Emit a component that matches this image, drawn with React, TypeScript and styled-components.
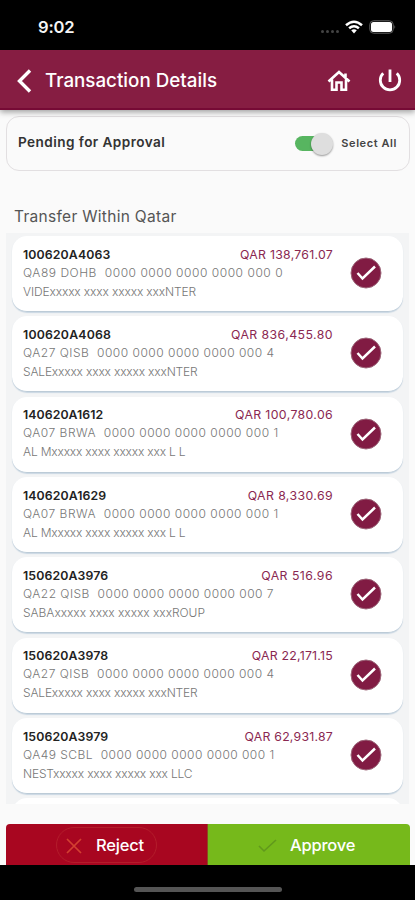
import React from "react";
import styled, { createGlobalStyle } from "styled-components";

const GlobalStyle = createGlobalStyle`
  * { box-sizing: border-box; }
  body { margin: 0; background: #fafafa; font-family: Inter, sans-serif; }
`;

const Screen = styled.div`
  width: 415px;
  height: 900px;
  display: flex;
  flex-direction: column;
  background: #fafafa;
  overflow: hidden;
`;

const StatusBar = styled.div`
  height: 50px;
  flex: none;
  display: flex;
  align-items: center;
  padding: 4px 19px 0 38px;
  background: #000;
  color: #f5f5f5;
`;

const Clock = styled.span`
  flex: 1;
  font-size: 16.6px;
  font-weight: 600;
  letter-spacing: -0.2px;
`;

const Signal = styled.div`
  display: flex;
  gap: 2px;
  padding-top: 9px;
  margin-right: 6px;
`;

const Dot = styled.i`
  width: 3px;
  height: 3px;
  border-radius: 50%;
  background: #444;
`;

const WifiIcon = styled.svg`
  width: 18px;
  height: 14px;
  margin-right: 6px;
`;

const BatteryIcon = styled.svg`
  width: 27px;
  height: 14px;
`;

const Header = styled.header`
  height: 60px;
  flex: none;
  display: flex;
  align-items: center;
  padding: 3px 13px 0 16px;
  background: #861d42;
  border-bottom: 2px solid #760a35;
  box-shadow: 0 2px 6px rgba(0, 0, 0, 0.38);
  color: #fff;
  z-index: 1;
`;

const Title = styled.h1`
  flex: 1;
  margin: 0 0 0 13px;
  font: 500 18.8px/24px Inter, sans-serif;
  letter-spacing: 0;
  padding-top: 1px;
  white-space: nowrap;
`;

const BackIcon = styled.svg`
  width: 16px;
  height: 24px;
`;

const HeaderIcon = styled.svg`
  width: 24px;
  height: 24px;
  margin-left: 27px;
`;

const PendingPanel = styled.section`
  height: 55px;
  flex: none;
  display: flex;
  align-items: center;
  margin: 6px 5px 0 6px;
  padding: 0 12px 3px 11px;
  border: 1px solid #e2dfe1;
  border-radius: 13px;
`;

const PendingTitle = styled.h2`
  flex: 1;
  margin: 0;
  font: 600 13.6px/20px Inter, sans-serif;
  letter-spacing: 0.43px;
  color: #333;
`;

const Track = styled.div`
  width: 38px;
  height: 15px;
  display: flex;
  align-items: center;
  justify-content: flex-end;
  border-radius: 8px;
  background: linear-gradient(90deg, #57b560 75%, transparent 75%);
  margin-top: 3px;
`;

const Knob = styled.div`
  width: 22px;
  height: 22px;
  flex: none;
  border-radius: 50%;
  background: #dedede;
  box-shadow: 0 1px 2px rgba(0, 0, 0, 0.4);
`;

const ToggleLabel = styled.span`
  margin: 2px 0 0 8px;
  font-size: 11px;
  font-weight: 600;
  letter-spacing: 0.58px;
  color: #444;
`;

const SectionTitle = styled.h2`
  flex: none;
  height: 62px;
  margin: 0;
  padding: 35px 0 0 14px;
  font: 400 15.5px/22px Inter, sans-serif;
  letter-spacing: 0.3px;
  color: #555;
`;

const List = styled.main`
  height: 571px;
  flex: none;
  display: flex;
  flex-direction: column;
  gap: 4.35px;
  margin: 0 6px;
  padding: 3px 6px 0;
  background: #f3f4f5;
  overflow: hidden;
`;

const Card = styled.article`
  height: 76px;
  flex: none;
  display: flex;
  align-items: center;
  padding: 0 20px 1px 11px;
  border-radius: 15px;
  background: #fff;
  border-bottom: 1px solid #bccbd7;
  box-shadow: 0 1px 1px rgba(150, 180, 205, 0.45);
`;

const Details = styled.div`
  width: 310px;
  margin-right: 17px;
`;

const Heading = styled.div`
  display: flex;
  justify-content: space-between;
  line-height: 19px;
`;

const Reference = styled.span<{ $spacing: number }>`
  font-size: 12.3px;
  font-weight: 600;
  letter-spacing: ${(p) => p.$spacing}px;
  color: #222;
`;

const Amount = styled.span<{ $spacing: number }>`
  font-size: 12.3px;
  letter-spacing: ${(p) => p.$spacing}px;
  color: #8a2851;
`;

const Line = styled.div<{ $spacing: number }>`
  font-size: 12px;
  font-weight: 300;
  line-height: 18.8px;
  letter-spacing: ${(p) => p.$spacing}px;
  white-space: pre;
  color: #777;
`;

const CheckIcon = styled.svg`
  width: 32px;
  height: 32px;
  flex: none;
`;

const Actions = styled.div`
  display: flex;
  height: 41px;
  flex: none;
  margin: 20px 5px 0 6px;
`;

const ActionButton = styled.button<{ $tone: "reject" | "approve" }>`
  width: 50%;
  flex: none;
  display: flex;
  align-items: center;
  justify-content: center;
  padding: ${(p) => (p.$tone === "reject" ? "0" : "0 17px 0 0")};
  border: 0;
  border-right: ${(p) => (p.$tone === "reject" ? "1px solid #8b4a20" : "0")};
  border-radius: ${(p) => (p.$tone === "reject" ? "4px 0 0 0" : "0 4px 0 0")};
  background: ${(p) => (p.$tone === "reject" ? "#a80620" : "#76b91b")};
  color: #fff;
  font: 500 16.5px/24px Inter, sans-serif;
  letter-spacing: -0.2px;
`;

const ButtonContent = styled.span<{ $outlined?: boolean }>`
  width: 101px;
  height: 36px;
  display: flex;
  align-items: center;
  gap: 13px;
  padding-left: 7px;
  border: 1px solid ${(p) => (p.$outlined ? "#b31d2b" : "transparent")};
  border-radius: 18px;
  white-space: nowrap;
`;

const ActionIcon = styled.svg`
  width: 19px;
  height: 20px;
  flex: none;
  margin-top: 2px;
`;

const HomeArea = styled.footer`
  flex: 1;
  display: flex;
  align-items: center;
  justify-content: center;
  padding-top: 14px;
  background: #000;
`;

const HomeIndicator = styled.div`
  width: 148px;
  height: 5px;
  border-radius: 3px;
  background: #555;
`;

type Transaction = {
  id: string;
  amount: string;
  account: string;
  name: string;
  spacing: [number, number, number, number];
};

const transactions: Transaction[] = [
  { id: "100620A4063", amount: "QAR 138,761.07", account: "QA89 DOHB  0000 0000 0000 0000 000 0", name: "VIDExxxxx xxxx xxxxx xxxNTER", spacing: [0.13, 0.26, 0.53, -0.14] },
  { id: "100620A4068", amount: "QAR 836,455.80", account: "QA27 QISB  0000 0000 0000 0000 000 4", name: "SALExxxxx xxxx xxxxx xxxNTER", spacing: [0.18, 0.43, 0.49, -0.18] },
  { id: "140620A1612", amount: "QAR 100,780.06", account: "QA07 BRWA  0000 0000 0000 0000 000 1", name: "AL Mxxxxx xxxx xxxxx xxx L L", spacing: [0.07, 0.36, 0.5, -0.19] },
  { id: "140620A1629", amount: "QAR 8,330.69", account: "QA07 BRWA  0000 0000 0000 0000 000 1", name: "AL Mxxxxx xxxx xxxxx xxx L L", spacing: [0.1, 0.4, 0.5, -0.19] },
  { id: "150620A3976", amount: "QAR 516.96", account: "QA22 QISB  0000 0000 0000 0000 000 7", name: "SABAxxxxx xxxx xxxxx xxxROUP", spacing: [0.13, 0.45, 0.48, -0.04] },
  { id: "150620A3978", amount: "QAR 22,171.15", account: "QA27 QISB  0000 0000 0000 0000 000 4", name: "SALExxxxx xxxx xxxxx xxxNTER", spacing: [0.13, 0.23, 0.49, -0.18] },
  { id: "150620A3979", amount: "QAR 62,931.87", account: "QA49 SCBL  0000 0000 0000 0000 000 1", name: "NESTxxxxx xxxx xxxxx xxx LLC", spacing: [0.13, 0.23, 0.46, -0.18] },
];

export default function App() {
  return (
    <Screen>
      <GlobalStyle />
      <StatusBar>
        <Clock>9:02</Clock>
        <Signal><Dot /><Dot /><Dot /><Dot /></Signal>
        <WifiIcon viewBox="0 0 18 14" fill="none" stroke="#fff" strokeWidth="2.5">
          <path d="M1 5.2Q9-1.8 17 5.2M4.1 8.3Q9 4.1 13.9 8.3" />
          <path d="M6.2 10.2Q9 8.2 11.8 10.2L9 13.5Z" fill="#fff" stroke="none" />
        </WifiIcon>
        <BatteryIcon viewBox="0 0 27 14">
          <rect x=".7" y=".7" width="23.6" height="12.6" rx="4" fill="#111" stroke="#555" />
          <rect x="2" y="1.9" width="21" height="10.2" rx="2.5" fill="#fff" />
          <path d="M25.5 5Q27 7 25.5 9Z" fill="#777" />
        </BatteryIcon>
      </StatusBar>
      <Header>
        <BackIcon viewBox="0 0 16 24" fill="none" stroke="#fff" strokeWidth="3.4"><path d="M14 1.5L3.5 12L14 22.5" /></BackIcon>
        <Title>Transaction Details</Title>
        <HeaderIcon viewBox="0 0 24 24" fill="none" stroke="#fff" strokeWidth="2.6">
          <path d="M1.5 12.5L12 3L22.5 12.5M5 10.5V20.7H9.5V13.5H14.5V20.7H19V10.5M18.5 9V4.5" />
        </HeaderIcon>
        <HeaderIcon viewBox="0 0 24 24" fill="none" stroke="#fff" strokeWidth="2.8">
          <path d="M12 0.5V13M5.2 4.3A9.7 9.7 0 1 0 18.8 4.3" />
        </HeaderIcon>
      </Header>
      <PendingPanel>
        <PendingTitle>Pending for Approval</PendingTitle>
        <Track><Knob /></Track>
        <ToggleLabel>Select All</ToggleLabel>
      </PendingPanel>
      <SectionTitle>Transfer Within Qatar</SectionTitle>
      <List>
        {transactions.map((item) => (
          <Card key={item.id}>
            <Details>
              <Heading>
                <Reference $spacing={item.spacing[0]}>{item.id}</Reference>
                <Amount $spacing={item.spacing[1]}>{item.amount}</Amount>
              </Heading>
              <Line $spacing={item.spacing[2]}>{item.account}</Line>
              <Line $spacing={item.spacing[3]}>{item.name}</Line>
            </Details>
            <CheckIcon viewBox="0 0 32 32" fill="none">
              <circle cx="16" cy="16" r="15" fill="#811b43" stroke="#9c6679" />
              <path d="M7.5 16L12.5 21.5L25 9.5" stroke="#fff" strokeWidth="2.5" />
            </CheckIcon>
          </Card>
        ))}
        <Card />
      </List>
      <Actions>
        <ActionButton $tone="reject">
          <ButtonContent $outlined>
            <ActionIcon viewBox="0 0 19 20" fill="none" stroke="#d24031" strokeWidth="1.7"><path d="M3 3L17 17M17 3L3 17" /></ActionIcon>
            Reject
          </ButtonContent>
        </ActionButton>
        <ActionButton $tone="approve">
          <ButtonContent>
            <ActionIcon viewBox="0 0 19 20" fill="none" stroke="#61991c" strokeWidth="1.6"><path d="M1 10L6 15L18 4" /></ActionIcon>
            Approve
          </ButtonContent>
        </ActionButton>
      </Actions>
      <HomeArea><HomeIndicator /></HomeArea>
    </Screen>
  );
}
